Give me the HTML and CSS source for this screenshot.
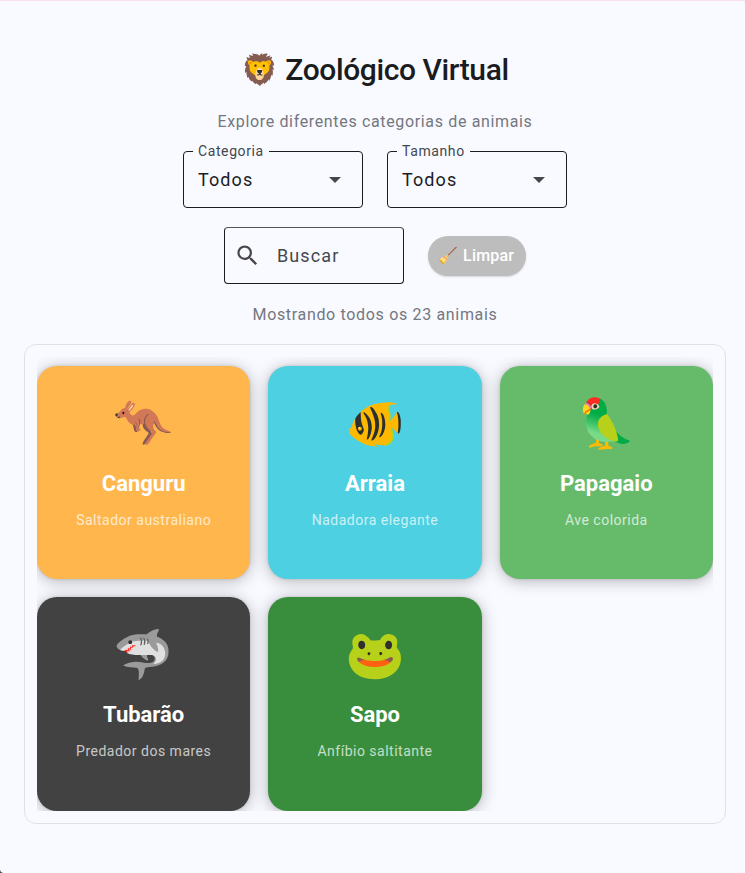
FILE: index.html
```html
<!DOCTYPE html>
<html lang="en">
<head>
    <meta charset="UTF-8">
    <meta name="viewport" content="width=device-width, initial-scale=1.0">
    <title>Zoológico Virtual</title>
    <link rel="stylesheet" href="styles.css">
</head>
<body>
    <div class="page">
        <h1 class="title"><span class="title-icon">🦁</span> Zoológico Virtual</h1>
        <p class="subtitle">Explore diferentes categorias de animais</p>

        <div class="filters">
            <div class="field">
                <span class="field-label">Categoria</span>
                <span class="field-value">Todos</span>
                <span class="arrow"></span>
            </div>
            <div class="field">
                <span class="field-label">Tamanho</span>
                <span class="field-value">Todos</span>
                <span class="arrow"></span>
            </div>
        </div>

        <div class="search-row">
            <div class="search">
                <svg class="search-icon" viewBox="0 0 24 24" width="27" height="27">
                    <path fill="#49454f" d="M15.5 14h-.79l-.28-.27A6.47 6.47 0 0 0 16 9.5 6.5 6.5 0 1 0 9.5 16c1.61 0 3.09-.59 4.23-1.57l.27.28v.79l5 4.99L20.49 19l-4.99-5zm-6 0C7.01 14 5 11.99 5 9.5S7.01 5 9.5 5 14 7.01 14 9.5 11.99 14 9.5 14z"/>
                </svg>
                <span class="search-text">Buscar</span>
            </div>
            <button type="button" class="clear"><span class="clear-icon">🧹</span> Limpar</button>
        </div>

        <p class="count">Mostrando todos os 23 animais</p>

        <div class="panel">
            <div class="grid">
                <div class="card orange">
                    <div class="card-icon">🦘</div>
                    <div class="card-name">Canguru</div>
                    <div class="card-desc">Saltador australiano</div>
                </div>
                <div class="card cyan">
                    <div class="card-icon">🐠</div>
                    <div class="card-name">Arraia</div>
                    <div class="card-desc">Nadadora elegante</div>
                </div>
                <div class="card green">
                    <div class="card-icon">🦜</div>
                    <div class="card-name">Papagaio</div>
                    <div class="card-desc">Ave colorida</div>
                </div>
                <div class="card dark">
                    <div class="card-icon">🦈</div>
                    <div class="card-name">Tubarão</div>
                    <div class="card-desc">Predador dos mares</div>
                </div>
                <div class="card forest">
                    <div class="card-icon">🐸</div>
                    <div class="card-name">Sapo</div>
                    <div class="card-desc">Anfíbio saltitante</div>
                </div>
            </div>
        </div>
    </div>
</body>
</html>
```

FILE: styles.css
```css
* {
    box-sizing: border-box;
}
body {
    margin: 0;
    font-family: Roboto, "Noto Color Emoji", sans-serif;
    background-color: #444;
}
.page {
    height: 873px;
    overflow: hidden;
    padding: 47px 19px 0 24px;
    background-color: #f9faff;
    border-top: 1px solid #f8dfec;
    border-bottom-left-radius: 4px;
    display: flex;
    flex-direction: column;
    align-items: center;
}
.title {
    margin: 0;
    font-size: 30px;
    line-height: 44px;
    font-weight: 500;
    letter-spacing: -0.4px;
    color: #1a1c1e;
}
.subtitle {
    margin: 18px 0 0;
    font-size: 16px;
    line-height: 24px;
    letter-spacing: 0.65px;
    color: #74777f;
}
.filters {
    display: flex;
    gap: 24px;
    margin-top: 17px;
}
.field {
    position: relative;
    width: 180px;
    height: 57px;
    border: 1.3px solid #1a1c1e;
    border-radius: 4px;
    padding: 0 14px;
    display: flex;
    align-items: center;
    justify-content: space-between;
}
.field-label {
    position: absolute;
    top: -9px;
    left: 9px;
    padding: 0 5px;
    background: #f9faff;
    font-size: 14px;
    line-height: 16px;
    letter-spacing: 0.6px;
    color: #44474e;
}
.field-value {
    font-size: 18px;
    letter-spacing: 1.1px;
    color: #1a1c1e;
}
.arrow {
    width: 0;
    height: 0;
    margin-right: 7px;
    border-left: 6px solid transparent;
    border-right: 6px solid transparent;
    border-top: 6px solid #44474e;
}
.search-row {
    display: flex;
    align-items: center;
    gap: 24px;
    margin-top: 19px;
}
.search {
    width: 180px;
    height: 57px;
    border: 1.3px solid #1a1c1e;
    border-top-color: #555;
    border-radius: 4px;
    padding: 0 0 0 9px;
    display: flex;
    align-items: center;
    gap: 16px;
}
.search-icon {
    flex: none;
}
.search-text {
    font-size: 18px;
    letter-spacing: 1.1px;
    color: #44474e;
}
.clear {
    height: 40px;
    width: 98px;
    border: none;
    border-radius: 20px;
    padding: 0 0 0 1px;
    background-color: #bdbdbd;
    box-shadow: 0 1px 2px rgba(0, 0, 0, 0.15);
    color: #fff;
    font-family: Roboto, "Noto Color Emoji", sans-serif;
    font-size: 16px;
    font-weight: 500;
    letter-spacing: 0.2px;
    white-space: nowrap;
}
.clear-icon {
    margin-left: -2px;
}
.count {
    margin: 19px 0 0;
    font-size: 16px;
    line-height: 24px;
    letter-spacing: 0.67px;
    color: #74777f;
}
.panel {
    width: 702px;
    height: 480px;
    margin-top: 17px;
    padding: 12px;
    border: 1px solid #dee1e6;
    border-radius: 12px;
}
.grid {
    height: 100%;
    overflow: hidden;
    padding-top: 9px;
    display: grid;
    grid-template-columns: repeat(3, 1fr);
    grid-auto-rows: 213.33px;
    gap: 18px;
}
.card {
    border-radius: 20px;
    box-shadow: 0 2px 16px rgba(0, 0, 0, 0.28), 0 0 3px rgba(0, 0, 0, 0.14);
    display: flex;
    flex-direction: column;
    align-items: center;
    color: #fff;
    padding-top: 26px;
}
.card-icon {
    font-size: 48px;
    line-height: 64px;
}
.card-name {
    margin-top: 13px;
    font-size: 22px;
    line-height: 30px;
    font-weight: 700;
}
.card-desc {
    margin-top: 11px;
    font-size: 14px;
    line-height: 20px;
    letter-spacing: 0.5px;
    opacity: 0.7;
}
.orange { background-color: #ffb74d; }
.cyan { background-color: #4dd0e1; }
.green { background-color: #66bb6a; }
.dark { background-color: #424242; }
.forest { background-color: #388e3c; }
```
